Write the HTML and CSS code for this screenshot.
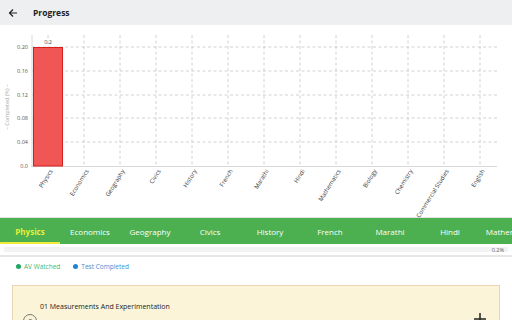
FILE: index.html
```html
<!DOCTYPE html>
<html>
<head>
<meta charset="utf-8">
<link rel="stylesheet" href="styles.css">
</head>
<body>
<div class="app">
  <header class="topbar">
    <svg class="back" width="10" height="10" viewBox="0 0 10 10"><path d="M9 5H1.5M5 1.5L1.5 5L5 8.5" fill="none" stroke="#222" stroke-width="1.2"/></svg>
    <span class="title">Progress</span>
  </header>
  <div class="chart">
    <svg width="512" height="193" viewBox="0 25 512 193">
      <g class="grid">
        <line x1="32" y1="47" x2="497" y2="47"/>
        <line x1="32" y1="71" x2="497" y2="71"/>
        <line x1="32" y1="95" x2="497" y2="95"/>
        <line x1="32" y1="118" x2="497" y2="118"/>
        <line x1="32" y1="142" x2="497" y2="142"/>
        <line x1="48" y1="35" x2="48" y2="166"/>
        <line x1="84" y1="35" x2="84" y2="166"/>
        <line x1="120" y1="35" x2="120" y2="166"/>
        <line x1="156" y1="35" x2="156" y2="166"/>
        <line x1="192" y1="35" x2="192" y2="166"/>
        <line x1="228" y1="35" x2="228" y2="166"/>
        <line x1="264" y1="35" x2="264" y2="166"/>
        <line x1="300" y1="35" x2="300" y2="166"/>
        <line x1="336" y1="35" x2="336" y2="166"/>
        <line x1="372" y1="35" x2="372" y2="166"/>
        <line x1="408" y1="35" x2="408" y2="166"/>
        <line x1="444" y1="35" x2="444" y2="166"/>
        <line x1="480" y1="35" x2="480" y2="166"/>
      </g>
      <line class="axis" x1="32" y1="35" x2="32" y2="166.5"/>
      <line class="axis" x1="31" y1="166.5" x2="497" y2="166.5"/>
      <rect class="bar" x="33.5" y="47.5" width="29" height="118.5"/>
      <text class="barlabel" x="48" y="44" text-anchor="middle">0.2</text>
      <g class="ylab" text-anchor="end">
        <text x="28" y="49">0.20</text>
        <text x="28" y="73">0.16</text>
        <text x="28" y="97">0.12</text>
        <text x="28" y="120">0.08</text>
        <text x="28" y="144">0.04</text>
        <text x="28" y="168">0.0</text>
      </g>
      <text class="ytitle" transform="translate(9,107) rotate(-90)" text-anchor="middle">–  Completed (%)  –</text>
      <g class="xlab" text-anchor="end">
        <text transform="translate(53,171) rotate(-58)">Physics</text>
        <text transform="translate(89,171) rotate(-58)">Economics</text>
        <text transform="translate(125,171) rotate(-58)">Geography</text>
        <text transform="translate(161,171) rotate(-58)">Civics</text>
        <text transform="translate(197,171) rotate(-58)">History</text>
        <text transform="translate(233,171) rotate(-58)">French</text>
        <text transform="translate(269,171) rotate(-58)">Marathi</text>
        <text transform="translate(305,171) rotate(-58)">Hindi</text>
        <text transform="translate(341,171) rotate(-58)">Mathematics</text>
        <text transform="translate(377,171) rotate(-58)">Biology</text>
        <text transform="translate(413,171) rotate(-58)">Chemistry</text>
        <text transform="translate(449,171) rotate(-58)">Commercial Studies</text>
        <text transform="translate(485,171) rotate(-58)">English</text>
      </g>
    </svg>
  </div>
  <nav class="tabs">
    <div class="tab active">Physics</div>
    <div class="tab">Economics</div>
    <div class="tab">Geography</div>
    <div class="tab">Civics</div>
    <div class="tab">History</div>
    <div class="tab">French</div>
    <div class="tab">Marathi</div>
    <div class="tab">Hindi</div>
    <div class="tab">Mathematics</div>
  </nav>
  <div class="progress">
    <div class="track"></div>
    <span class="pct">0.2%</span>
  </div>
  <div class="legend">
    <span class="item green"><span class="dot"></span>AV Watched</span>
    <span class="item blue"><span class="dot"></span>Test Completed</span>
  </div>
  <div class="card">
    <div class="card-title">01 Measurements And Experimentation</div>
    <div class="card-row">
      <span class="circle">C</span>
      <span class="spacer"></span>
      <span class="zero">0%</span>
      <svg class="plus" width="12" height="12" viewBox="0 0 12 12"><path d="M6 0V12M0 6H12" stroke="#222" stroke-width="1.5"/></svg>
    </div>
  </div>
</div>
</body>
</html>
```
FILE: styles.css
```css
* { box-sizing: border-box; }
html, body { margin: 0; padding: 0; }
body {
  width: 512px;
  height: 320px;
  overflow: hidden;
  background: #fff;
  font-family: "Open Sans", "Noto Sans", sans-serif;
}
.app { display: flex; flex-direction: column; width: 512px; }
.topbar {
  height: 25px;
  background: #eeeff1;
  display: flex;
  align-items: center;
  padding-left: 8px;
}
.back { margin-right: 15px; }
.title { font-size: 8.5px; font-weight: 700; color: #222; }
.chart { height: 193px; border-bottom: 1px solid #e3e3e3; }
.chart svg { display: block; }
.grid line { stroke: #c6c6c6; stroke-width: 0.8; stroke-dasharray: 3 2.5; }
.axis { stroke: #d8d8d8; stroke-width: 1; }
.bar { fill: #f05656; stroke: #d91e1e; stroke-width: 1; }
.barlabel { font-size: 5.5px; fill: #444; font-family: "Open Sans", sans-serif; }
.ylab text { font-size: 5.5px; fill: #555; font-family: "Open Sans", sans-serif; }
.ytitle { font-size: 5.5px; fill: #aaa; font-family: "Open Sans", sans-serif; }
.xlab text { font-size: 6px; fill: #333; font-family: "Open Sans", sans-serif; }
.tabs {
  height: 26px;
  background: #4caf50;
  display: flex;
  overflow: hidden;
  white-space: nowrap;
}
.tab {
  flex: 0 0 60px;
  display: flex;
  align-items: center;
  justify-content: center;
  color: #fff;
  font-size: 8px;
  border-bottom: 2px solid transparent;
  padding-top: 2px;
}
.tab.active { color: #e9ee3a; font-weight: 700; border-bottom-color: #f2e93a; }
.progress {
  height: 13px;
  display: flex;
  align-items: center;
  padding: 0 4px;
  border-bottom: 2px solid #e6e6e6;
  position: relative;
}
.track { flex: 1; height: 5px; background: #f3f3f3; }
.pct {
  position: absolute;
  right: 8px;
  top: 2px;
  font-size: 5.5px;
  color: #666;
}
.legend {
  display: flex;
  gap: 13px;
  padding: 5px 0 0 16px;
  height: 28px;
  font-size: 6.5px;
}
.item { display: flex; align-items: flex-start; gap: 3px; }
.dot { width: 5px; height: 5px; border-radius: 50%; margin-top: 2px; }
.green { color: #3fb877; }
.green .dot { background: #1fa862; }
.blue { color: #3a8fd6; }
.blue .dot { background: #1e84d4; }
.card {
  margin: 0 12px;
  background: #fcf4d8;
  border: 1px solid #e9d5b1;
  height: 60px;
  padding: 16px 0 0 27px;
}
.card-title { font-size: 7px; color: #222; }
.card-row { display: flex; align-items: flex-start; margin-top: 3px; margin-left: -17px; }
.circle {
  width: 14px; height: 14px;
  border: 1px solid #777;
  border-radius: 50%;
  font-size: 7px;
  display: flex; align-items: center; justify-content: center;
  color: #555;
}
.spacer { flex: 1; }
.zero { font-size: 5.5px; color: #666; margin-right: 8px; margin-top: 5px; }
.plus { margin-right: 13px; margin-top: -1px; }
```
